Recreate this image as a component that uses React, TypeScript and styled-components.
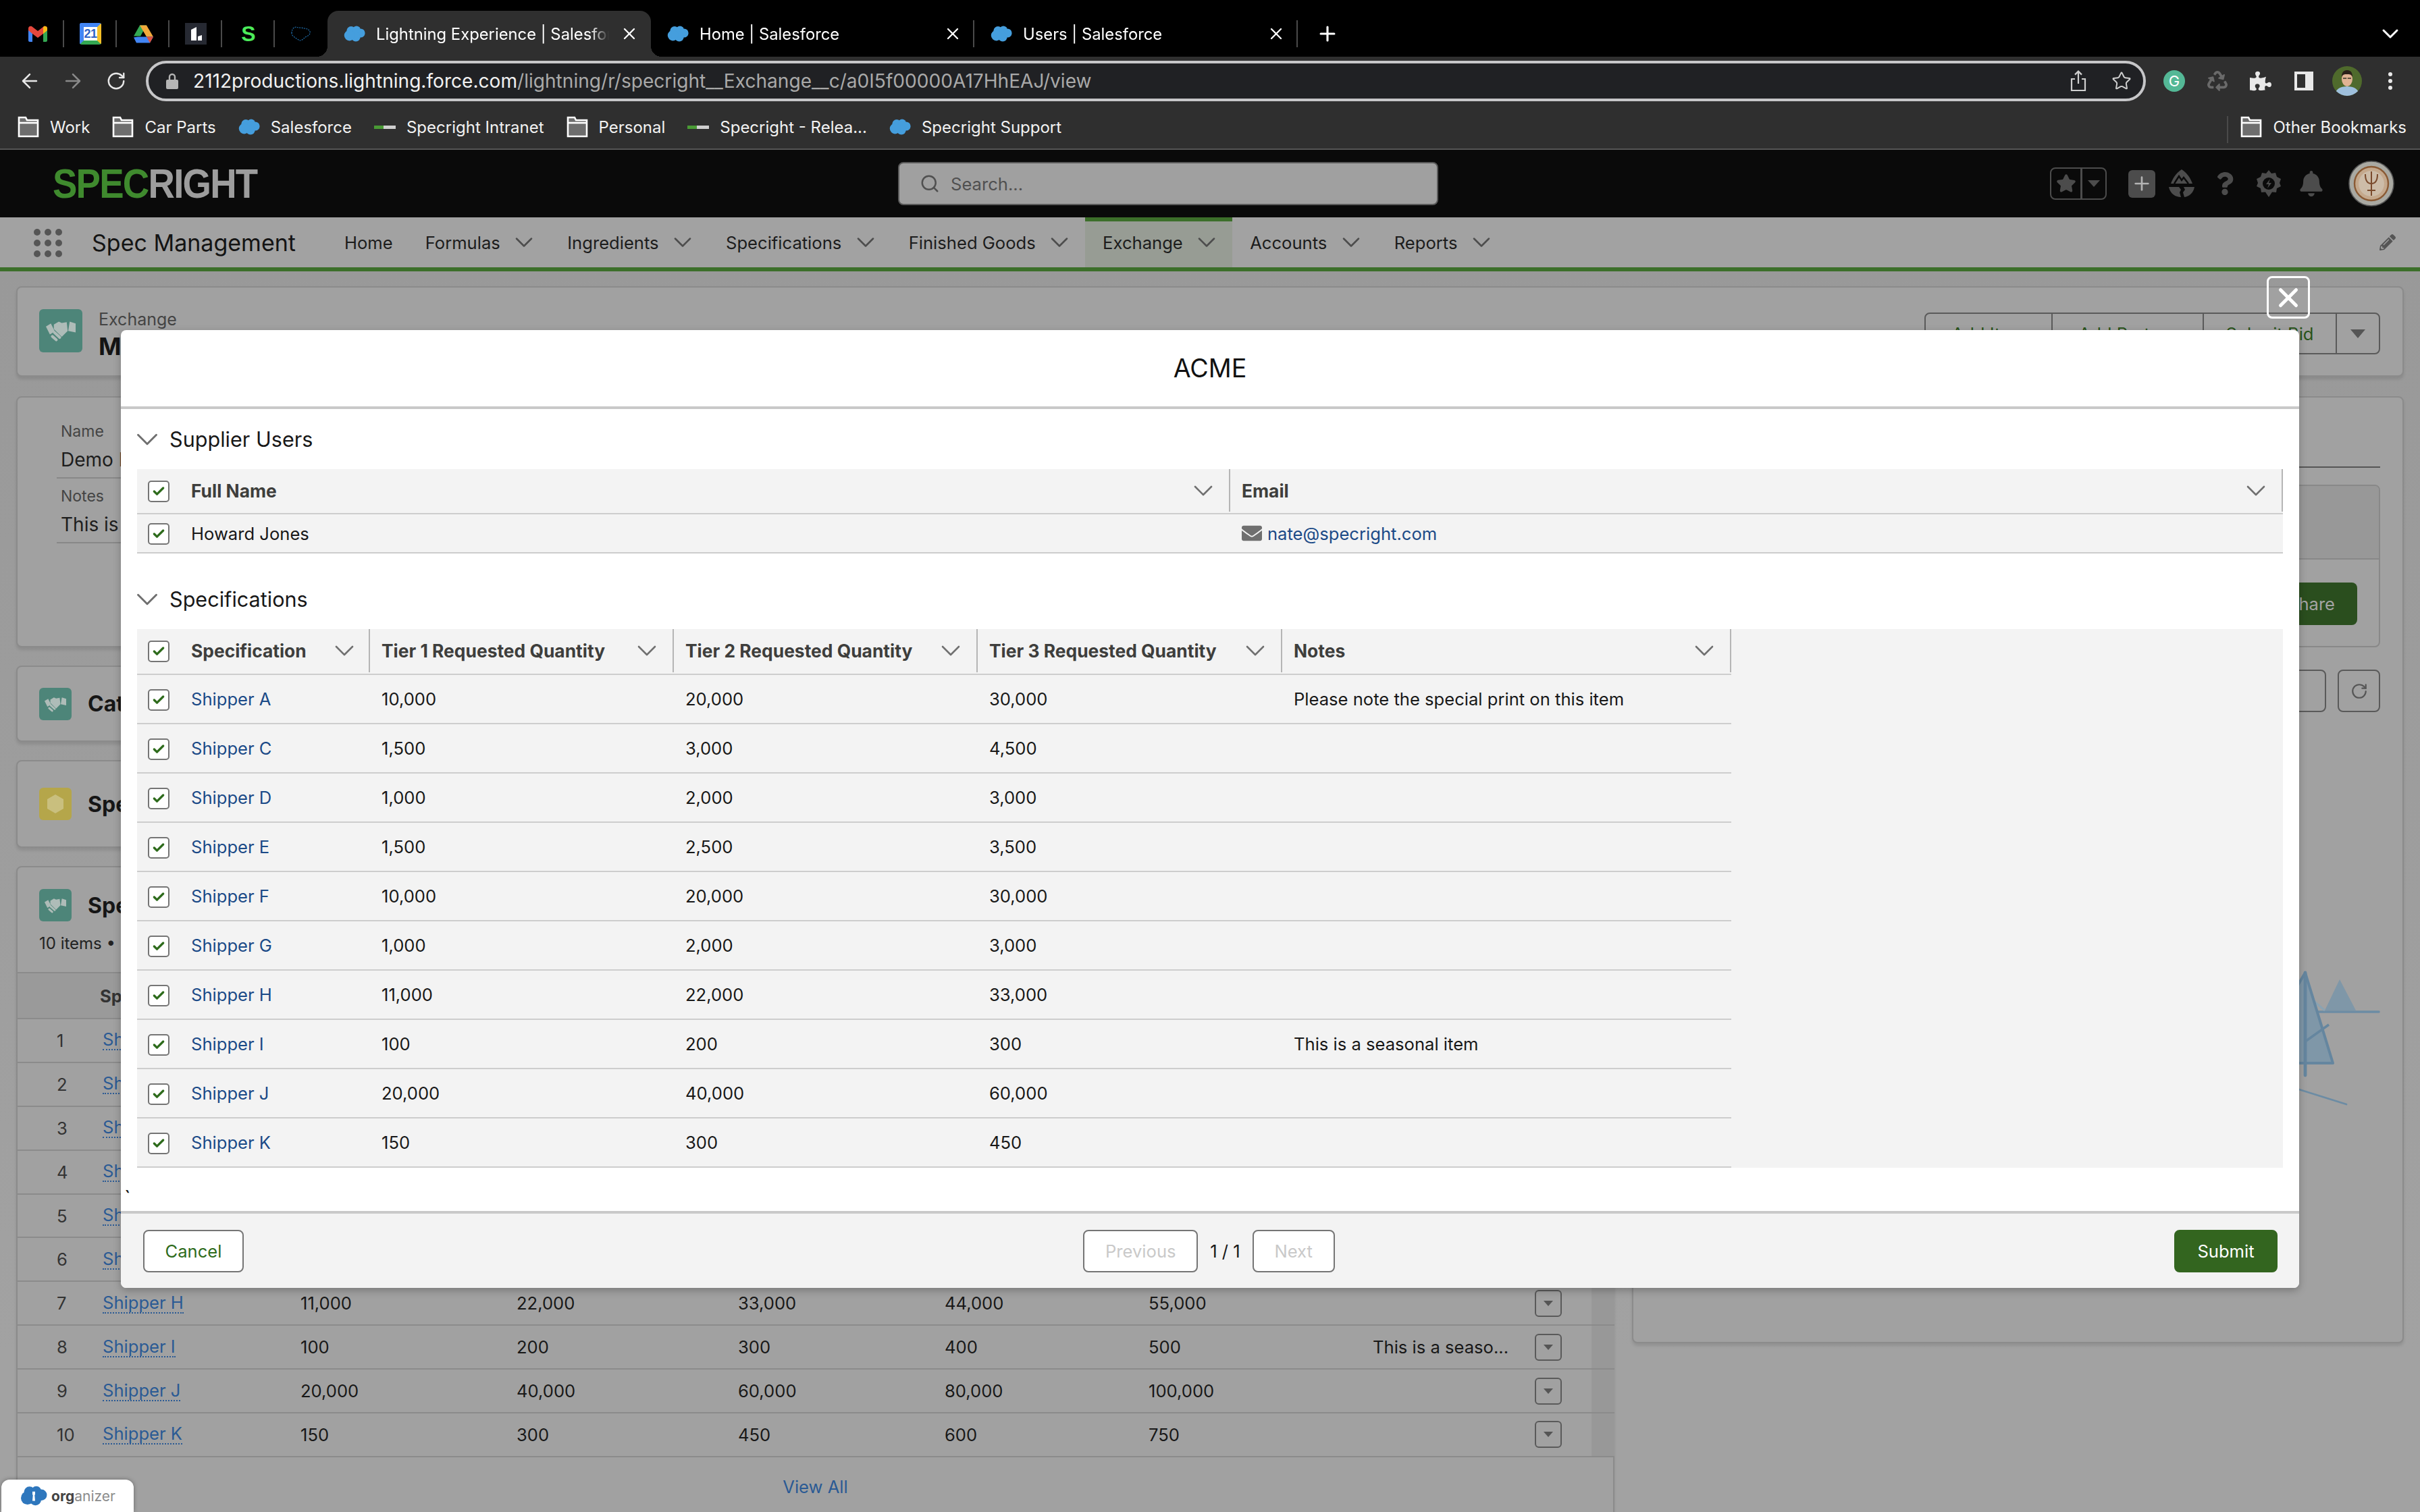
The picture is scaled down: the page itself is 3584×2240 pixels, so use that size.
import React from 'react';
import styled, { createGlobalStyle } from 'styled-components';
import {
  ArrowLeft,
  ArrowRight,
  Check,
  ChevronDown,
  Plus,
  RotateCw,
  Search,
  Star,
  X,
} from 'lucide-react';
import { FaBell, FaPuzzlePiece, FaRecycle, FaPencilAlt, FaEnvelope, FaQuestion } from 'react-icons/fa';

const GlobalStyle = createGlobalStyle`
  html, body {
    margin: 0;
    background: #000;
    overflow: hidden;
  }
  * {
    box-sizing: border-box;
  }
`;

// the shot is a 2x retina capture, everything below is in 1792x1120 units
const Stage = styled.div`
  zoom: 2;
  position: relative;
  width: 1792px;
  height: 1120px;
  overflow: hidden;
  display: flex;
  flex-direction: column;
  font-family: Inter, 'Liberation Sans', sans-serif;
  font-size: 12.8px;
  color: #181818;
`;

/* browser chrome */
const TabStrip = styled.div`
  height: 42px;
  flex: none;
  background: #000;
  display: flex;
  align-items: flex-end;
  padding-left: 8.5px;
  color: #fff;
`;

const PinnedTab = styled.div<{ $last?: boolean }>`
  width: 39px;
  height: 34px;
  display: flex;
  align-items: center;
  justify-content: center;
  position: relative;
  &::after {
    content: '';
    display: ${(p) => (p.$last ? 'none' : 'block')};
    position: absolute;
    right: 0;
    top: 7px;
    height: 20px;
    width: 1px;
    background: #4a4a4a;
  }
`;

const BrowserTab = styled.div<{ $active?: boolean; $divider?: boolean }>`
  width: 239.5px;
  height: 34px;
  padding: 0 9px 0 12px;
  display: flex;
  align-items: center;
  gap: 8px;
  border-radius: 8px 8px 0 0;
  background: ${(p) => (p.$active ? '#2f2f2f' : 'transparent')};
  position: relative;
  &::before {
    content: '';
    display: ${(p) => (p.$active ? 'block' : 'none')};
    position: absolute;
    left: -8px;
    right: -8px;
    bottom: 0;
    height: 8px;
    background:
      radial-gradient(circle at 0 0, transparent 8px, #2f2f2f 8px) left bottom / 8px 8px no-repeat,
      radial-gradient(circle at 100% 0, transparent 8px, #2f2f2f 8px) right bottom / 8px 8px no-repeat;
  }
  &::after {
    content: '';
    display: ${(p) => (p.$divider ? 'block' : 'none')};
    position: absolute;
    right: 0;
    top: 7px;
    height: 20px;
    width: 1px;
    background: #4a4a4a;
  }
`;

const TabTitle = styled.span`
  flex: 1;
  overflow: hidden;
  white-space: nowrap;
  font-size: 11.9px;
  -webkit-mask-image: linear-gradient(90deg, #000 92%, transparent 100%);
  mask-image: linear-gradient(90deg, #000 92%, transparent 100%);
`;

const NewTab = styled.div`
  width: 44px;
  height: 34px;
  display: flex;
  align-items: center;
  justify-content: center;
`;

const TabListButton = styled.div`
  margin-left: auto;
  margin-right: 12px;
  height: 34px;
  display: flex;
  align-items: center;
`;

const Toolbar = styled.div`
  height: 36px;
  flex: none;
  background: #2f2f2f;
  display: flex;
  align-items: center;
  padding-left: 13px;
  color: #e8e8e8;
`;

const ToolButton = styled.div<{ $width?: number }>`
  width: ${(p) => p.$width ?? 32}px;
  height: 30px;
  flex: none;
  display: flex;
  align-items: center;
  justify-content: center;
`;

const UrlBar = styled.div`
  width: 1481px;
  height: 30px;
  flex: none;
  margin-left: -1px;
  border: 2px solid #c6c6c8;
  border-radius: 15px;
  background: #202124;
  display: flex;
  align-items: center;
  padding: 0 0 0 13px;
  font-size: 14.05px;
  white-space: nowrap;
`;

const LockIcon = styled.svg`
  flex: none;
  margin-right: 11px;
`;

const UrlHost = styled.span`
  color: #f1f1f1;
`;

const UrlPath = styled.span`
  color: #a9a9a9;
  flex: 1;
`;

const Bookmarks = styled.div`
  height: 33px;
  flex: none;
  background: #2f2f2f;
  border-bottom: 1px solid #555;
  display: flex;
  align-items: center;
  padding-left: 13px;
  gap: 16.5px;
  color: #f2f2f2;
  font-size: 12px;
  white-space: nowrap;
`;

const Bookmark = styled.div`
  display: flex;
  align-items: center;
  gap: 8px;
`;

const OtherBookmarks = styled(Bookmark)`
  margin-left: auto;
  padding-left: 10px;
  padding-right: 10px;
  position: relative;
  &::before {
    content: '';
    position: absolute;
    left: 0;
    top: 0;
    height: 20px;
    width: 1px;
    background: #4a4a4a;
  }
`;

/* salesforce global header */
const GlobalHeader = styled.div`
  height: 50px;
  flex: none;
  background: #0a0a0a;
  display: flex;
  align-items: center;
  padding-left: 39px;
  position: relative;
`;

const Logo = styled.div`
  width: 153px;
  font-family: 'Liberation Sans', sans-serif;
  font-weight: 700;
  font-size: 30.5px;
  letter-spacing: -1px;
  white-space: nowrap;
  color: #9d9d9d;
  transform: scaleX(0.895);
  transform-origin: left center;
`;

const LogoSpec = styled.span`
  color: #3f8a2e;
`;

const SearchBox = styled.div`
  width: 400px;
  height: 32px;
  margin-left: 473px;
  background: #a0a0a0;
  border: 1px solid #5a5a5a;
  border-radius: 4px;
  display: flex;
  align-items: center;
  padding-left: 15px;
  gap: 8px;
  color: #505050;
`;

const HeaderActions = styled.div`
  margin-left: auto;
  margin-right: 19px;
  display: flex;
  align-items: center;
`;

const FavouriteGroup = styled.div`
  width: 42px;
  height: 24px;
  display: flex;
  border: 1px solid #4c4c4c;
  border-radius: 4px;
  margin-right: 16px;
`;

const FavouriteStar = styled.div`
  width: 23px;
  display: flex;
  align-items: center;
  justify-content: center;
  border-right: 1.5px solid #4c4c4c;
`;

const FavouriteCaret = styled.div`
  flex: 1;
  display: flex;
  align-items: center;
  justify-content: center;
`;

const GlobalAdd = styled.div`
  width: 20px;
  height: 20.5px;
  border-radius: 3px;
  background: #4c4c4c;
  color: #b4b4b4;
  display: flex;
  align-items: center;
  justify-content: center;
`;

const HeaderIcon = styled.div<{ $gap: number; $width: number }>`
  width: ${(p) => p.$width}px;
  margin-left: ${(p) => p.$gap}px;
  height: 22px;
  display: flex;
  align-items: center;
  justify-content: center;
  color: #4c4c4c;
`;

/* app nav */
const NavBar = styled.div`
  height: 40px;
  flex: none;
  background: #a2a2a2;
  border-bottom: 3px solid #3c6f2a;
  display: flex;
  align-items: stretch;
  padding-left: 25px;
  position: relative;
`;

const Waffle = styled.div`
  width: 21px;
  display: grid;
  grid-template-columns: repeat(3, 5px);
  grid-auto-rows: 5px;
  gap: 3px;
  align-content: center;
  margin-top: 1px;
`;

const WaffleDot = styled.span`
  border-radius: 50%;
  background: #555;
`;

const AppName = styled.div`
  width: 174px;
  margin-left: 22px;
  font-size: 17px;
  display: flex;
  align-items: center;
  color: #141414;
  white-space: nowrap;
`;

const NavItem = styled.div<{ $active?: boolean }>`
  display: flex;
  align-items: center;
  padding: 0 13px;
  gap: 9.7px;
  white-space: nowrap;
  color: #1c1c1c;
  background: ${(p) => (p.$active ? '#979c94' : 'transparent')};
  position: relative;
  &::before {
    content: '';
    display: ${(p) => (p.$active ? 'block' : 'none')};
    position: absolute;
    left: 0;
    right: 0;
    top: 0;
    height: 3px;
    background: #3c6f2a;
  }
`;

const NavHome = styled(NavItem)`
  margin-right: -2px;
`;

const NavChevron = styled(ChevronDown)`
  color: #4d4d4d;
  margin: 0 -5px 0 -3px;
`;

const NavEdit = styled.div`
  margin-left: auto;
  margin-right: 18px;
  display: flex;
  align-items: center;
  color: #555;
`;

/* record page behind the backdrop */
const Page = styled.div`
  flex: 1;
  min-height: 0;
  overflow: hidden;
  background: linear-gradient(180deg, #999 0, #9c9c9c 300px, #a2a2a2 800px);
  padding: 11px 12px 0;
`;

const Card = styled.div`
  background: #a1a1a1;
  border: 1px solid #8b8b8b;
  border-radius: 4px;
  box-shadow: 0 2px 2px rgba(0, 0, 0, 0.1);
`;

const RecordHeader = styled(Card)`
  height: 67px;
  margin-bottom: 14.5px;
  display: flex;
  align-items: flex-start;
  padding: 16px 16.5px 0 16px;
`;

const ObjectIcon = styled.div<{ $size: number; $color?: string }>`
  width: ${(p) => p.$size}px;
  height: ${(p) => p.$size}px;
  flex: none;
  border-radius: 3px;
  background: ${(p) => p.$color ?? '#4d8579'};
  color: #aebcb8;
  display: flex;
  align-items: center;
  justify-content: center;
`;

const RecordTitles = styled.div`
  margin-left: 12px;
`;

const RecordType = styled.div`
  color: #444;
  font-size: 12.5px;
  line-height: 15px;
`;

const RecordName = styled.div`
  font-size: 18px;
  line-height: 21px;
  font-weight: 700;
  color: #141414;
  margin-top: 2px;
`;

const ButtonGroup = styled.div`
  margin-left: auto;
  margin-top: 2.5px;
  height: 31px;
  display: flex;
  border: 1px solid #5a5a5a;
  border-radius: 4px;
  color: #28531a;
  white-space: nowrap;
`;

const GroupButton = styled.div<{ $width: number }>`
  width: ${(p) => p.$width}px;
  display: flex;
  align-items: center;
  justify-content: center;
  border-right: 1px solid #5a5a5a;
`;

const GroupCaret = styled.div`
  width: 31px;
  display: flex;
  align-items: center;
  justify-content: center;
`;

const Caret = styled.span<{ $size?: number; $color?: string }>`
  width: 0;
  height: 0;
  border-left: ${(p) => p.$size ?? 5}px solid transparent;
  border-right: ${(p) => p.$size ?? 5}px solid transparent;
  border-top: ${(p) => (p.$size ?? 5) * 1.2}px solid ${(p) => p.$color ?? '#555'};
`;

const Columns = styled.div`
  display: flex;
  gap: 13px;
  align-items: flex-start;
`;

const LeftColumn = styled.div`
  width: 1183.5px;
  flex: none;
  display: flex;
  flex-direction: column;
  gap: 13.5px;
`;

const DetailCard = styled(Card)`
  height: 186px;
  padding: 17px 16px 0 29px;
`;

const DetailLabel = styled.div`
  color: #444;
  font-size: 11.5px;
  line-height: 16px;
  padding-left: 3px;
`;

const DetailValue = styled.div`
  font-size: 14px;
  line-height: 20px;
  padding: 3px 0 3px 3px;
  border-bottom: 1px solid #888;
  margin-bottom: 5px;
  color: #1d1d1d;
`;

const RelatedCard = styled(Card)<{ $height: number }>`
  height: ${(p) => p.$height}px;
  display: flex;
  align-items: center;
  padding-left: 16px;
  gap: 12px;
`;

const CardTitle = styled.div`
  font-size: 16px;
  font-weight: 700;
  color: #161616;
`;

const ListCard = styled(Card)`
  height: 520px;
`;

const ListHeader = styled.div`
  height: 77.5px;
  padding: 16px 16px 0;
`;

const ListTitleRow = styled.div`
  display: flex;
  align-items: center;
  gap: 12px;
`;

const ListMeta = styled.div`
  margin-top: 9px;
  font-size: 12px;
  color: #222;
`;

const listColumns = '63px 146.5px 160px 164px 153px 151px 166px 120px 42px 17px';

const ListRow = styled.div<{ $head?: boolean }>`
  display: grid;
  grid-template-columns: ${listColumns};
  height: ${(p) => (p.$head ? 34 : 32.45)}px;
  align-items: center;
  border-top: 1px solid #8b8b8b;
  background: ${(p) => (p.$head ? '#9a9a9a' : 'transparent')};
`;

const ListIndex = styled.span`
  padding-left: 29px;
  color: #333;
`;

const ListLink = styled.span`
  justify-self: start;
  color: #2a5a94;
  border-bottom: 1px dotted #2a5a94;
  line-height: 14px;
`;

const ListHeadText = styled.span`
  font-weight: 700;
  color: #333;
  margin-left: -2px;
`;

const RowMenu = styled.div`
  width: 20px;
  height: 20px;
  border: 1px solid #5a5a5a;
  border-radius: 3px;
  display: flex;
  align-items: center;
  justify-content: center;
`;

const Gutter = styled.div<{ $column?: number }>`
  grid-column: ${(p) => p.$column ?? 'auto'};
  height: 100%;
  background: #989898;
`;

const ViewAll = styled.div`
  height: 45px;
  border-top: 1px solid #8b8b8b;
  display: flex;
  align-items: center;
  justify-content: center;
  color: #2a5a94;
`;

const RightCard = styled(Card)`
  width: 571.5px;
  height: 701.6px;
  flex: none;
  padding: 0 16.5px 0 16px;
  display: flex;
  flex-direction: column;
`;

const RightTabs = styled.div`
  height: 52px;
  flex: none;
  border-bottom: 1px solid #555;
`;

const ShareBox = styled.div`
  margin-top: 12.5px;
  height: 120.5px;
  flex: none;
  border: 1px solid #888;
  border-radius: 4px;
  overflow: hidden;
`;

const ShareBoxHead = styled.div`
  height: 54.5px;
  background: #989898;
  border-bottom: 1px solid #888;
`;

const ShareBoxBody = styled.div`
  display: flex;
  justify-content: flex-end;
  padding: 17px 16px;
`;

const ShareButton = styled.div`
  width: 68px;
  height: 31.5px;
  background: #2a4e1e;
  color: #a3a3a3;
  border-radius: 4px;
  display: flex;
  align-items: center;
  justify-content: center;
`;

const FilterRow = styled.div`
  margin-top: 16.5px;
  height: 31.5px;
  flex: none;
  display: flex;
  gap: 8.5px;
`;

const FilterInput = styled.div`
  flex: 1;
  border: 1px solid #5a5a5a;
  border-radius: 4px;
`;

const RefreshButton = styled.div`
  width: 31.5px;
  border: 1px solid #5a5a5a;
  border-radius: 4px;
  color: #555;
  display: flex;
  align-items: center;
  justify-content: center;
`;

const EmptyArt = styled.svg`
  margin-top: 189px;
  align-self: flex-end;
  flex: none;
`;

const OrganizerBadge = styled.div`
  position: absolute;
  left: 1px;
  bottom: 0;
  width: 98px;
  height: 24px;
  background: #fff;
  border-radius: 6px 6px 0 0;
  box-shadow: 0 0 3px rgba(0, 0, 0, 0.35);
  display: flex;
  align-items: center;
  padding-left: 14px;
  gap: 3px;
  font-size: 10.5px;
  color: #8c8c8c;
`;

const OrganizerBold = styled.span`
  color: #444;
  font-weight: 700;
`;

/* modal */
const CloseButton = styled.div`
  position: absolute;
  left: 1678.7px;
  top: 204.5px;
  width: 32px;
  height: 31.5px;
  border: 1.5px solid #fff;
  border-radius: 4px;
  color: #fff;
  display: flex;
  align-items: center;
  justify-content: center;
`;

const Modal = styled.div`
  position: absolute;
  left: 89.5px;
  top: 244.5px;
  width: 1613px;
  height: 709.5px;
  display: flex;
  flex-direction: column;
  background: #fff;
  border-radius: 4px;
  box-shadow: 0 2px 6px rgba(0, 0, 0, 0.25);
  overflow: hidden;
`;

const ModalHeader = styled.div`
  height: 58.5px;
  flex: none;
  border-bottom: 2px solid #c9c9c9;
  display: flex;
  align-items: center;
  justify-content: center;
  font-size: 18.8px;
  color: #111;
`;

const ModalBody = styled.div`
  flex: 1;
  padding: 0 12px;
  position: relative;
`;

const SectionTitle = styled.div<{ $spaced?: boolean }>`
  height: 44.5px;
  margin-top: ${(p) => (p.$spaced ? 11.5 : 0)}px;
  display: flex;
  align-items: center;
  gap: 3px;
  margin-left: -6px;
  font-size: 15.3px;
  color: #181818;
`;

const SectionChevron = styled(ChevronDown)`
  color: #6f6f6f;
`;

const TableArea = styled.div`
  background: #f3f3f3;
`;

const SpecTable = styled.div`
  width: 1180.5px;
`;

const TableRow = styled.div<{ $columns: string; $height: number }>`
  display: grid;
  grid-template-columns: ${(p) => p.$columns};
  height: ${(p) => p.$height}px;
  align-items: stretch;
  border-bottom: 1px solid #cdcdcd;
`;

const HeadCell = styled.div<{ $lead?: boolean }>`
  display: flex;
  align-items: center;
  gap: 16px;
  padding: 0 7px 0 ${(p) => (p.$lead ? 8 : 8.5)}px;
  border-right: 1px solid #b5b5b5;
  margin-bottom: 1px;
  font-size: 13.2px;
  font-weight: 700;
  color: #3e3e3c;
  white-space: nowrap;
`;

const HeadLabel = styled.span`
  flex: 1;
`;

const HeadChevron = styled(ChevronDown)`
  flex: none;
  color: #707070;
`;

const Cell = styled.div<{ $lead?: boolean }>`
  display: flex;
  align-items: center;
  gap: 16px;
  padding: 0 8px 0 ${(p) => (p.$lead ? 8 : 8.5)}px;
  white-space: nowrap;
`;

const SpecLink = styled.span`
  color: #1b4a87;
`;

const CheckBox = styled.span`
  width: 16px;
  height: 16px;
  flex: none;
  background: #fff;
  border: 1px solid #757575;
  border-radius: 2.5px;
  color: #2e6b1c;
  display: flex;
  align-items: center;
  justify-content: center;
  margin-top: 1px;
`;

const MailLink = styled.span`
  display: flex;
  align-items: center;
  gap: 4px;
  color: #1b4a87;
`;

const Backtick = styled.span`
  position: absolute;
  left: 2.5px;
  top: 577px;
  font-size: 15px;
  line-height: 15px;
`;

const ModalFooter = styled.div`
  height: 57px;
  flex: none;
  background: #f3f3f3;
  border-top: 2px solid #c9c9c9;
  display: grid;
  grid-template-columns: 1fr auto 1fr;
  align-items: center;
  padding: 0 16px 0 16.5px;
`;

const Button = styled.div<{ $width: number; $disabled?: boolean }>`
  width: ${(p) => p.$width}px;
  height: 31.5px;
  background: #fff;
  border: 1px solid #757575;
  border-radius: 4px;
  color: ${(p) => (p.$disabled ? '#c9c9c9' : '#2e6b1c')};
  display: flex;
  align-items: center;
  justify-content: center;
`;

const BrandButton = styled(Button)`
  justify-self: end;
  background: #33651f;
  border-color: #33651f;
  color: #fff;
`;

const Pager = styled.div`
  display: flex;
  align-items: center;
  gap: 9px;
  margin-left: -2px;
`;

const Cloud = ({ size = 16, color = '#459edd', keyhole }: { size?: number; color?: string; keyhole?: boolean }) => (
  <svg width={size} height={size * 0.75} viewBox="0 0 16 12" fill={color} style={{ flex: 'none' }}>
    <circle cx="5.500" cy="3.800" r="3.300" />
    <circle cx="9.500" cy="3.300" r="3" />
    <circle cx="12.500" cy="5.500" r="3.300" />
    <circle cx="9" cy="8.300" r="3.400" />
    <circle cx="4.300" cy="7.300" r="3.900" />
    {keyhole && <path d="M7.200 3.500h1.600v1.700l-.3.4.3 3.400H7.200l.3-3.400-.3-.4z" fill="#fff" />}
  </svg>
);

const Folder = () => (
  <svg width="16" height="16" viewBox="0 0 16 16" style={{ flex: 'none' }}>
    <path d="M1 3V1h5l1 2h8v12H1z" fill="#6e6e6e" stroke="#fff" strokeWidth="1.300" />
    <path d="M1 5h14" stroke="#fff" strokeWidth="1.300" />
  </svg>
);

const SpecrightMini = () => (
  <svg width="16" height="16" viewBox="0 0 16 16" style={{ flex: 'none' }}>
    <rect x="0" y="7" width="7" height="2.500" fill="#4a9a35" />
    <rect x="7" y="7" width="9" height="2.500" fill="#cfcfcf" />
  </svg>
);

const Gmail = () => (
  <svg width="15" height="12" viewBox="0 0 30 24">
    <path d="M1 6v16c0 1 1 2 2 2h4V10z" fill="#4285f4" />
    <path d="M29 6v16c0 1-1 2-2 2h-4V10z" fill="#34a853" />
    <path d="M1 7V4c0-3 3-4 5-3l9 7 9-7c2-1 5 0 5 3v3l-6 5-8 6-8-6z" fill="#e5483d" />
    <path d="M23 2.500 24 1c2-1 5 0 5 3v3l-6 5z" fill="#f9bc15" />
  </svg>
);

const CalendarIcon = styled.div`
  width: 16px;
  height: 16px;
  background: #fff;
  border: solid;
  border-color: #4285f4 #f6bf26 #34a853 #4285f4;
  border-width: 3px;
  border-radius: 1.5px;
  color: #2f62c6;
  font-family: 'Liberation Sans', sans-serif;
  font-size: 9px;
  font-weight: 700;
  line-height: 10px;
  text-align: center;
  letter-spacing: -0.3px;
`;

const Drive = () => (
  <svg width="15" height="14" viewBox="0 0 30 27">
    <path d="M10 1h10L11 17H1z" fill="#34a853" />
    <path d="M10 1h10l10 17H20z" fill="#f2a93b" />
    <path d="M7 18h23l-5 9H5L1 19z" fill="#4285f4" />
    <path d="M25 27l-5-9h10z" fill="#e0523f" />
  </svg>
);

const LatticeTile = () => (
  <svg width="16" height="16" viewBox="0 0 16 16">
    <rect width="16" height="16" fill="#262932" />
    <path d="M4.500 5 8.500 3v10h-4zM9.500 10l3-1v4h-3z" fill="#fff" />
  </svg>
);

const GreenS = styled.span`
  color: #4cec5a;
  font-family: 'Liberation Sans', sans-serif;
  font-weight: 700;
  font-size: 16px;
`;

const DashedCloud = () => (
  <svg width="16" height="13" viewBox="0 0 16 13">
    <path
      d="M1 6c0-2 1-4 2-4 1-1 2 0 3 0s3 0 4 .5c2 0 4 1 4.500 2.500.5 1.500-1 3-2.500 3.500-2 1-3 3-5 3-1-.5-3-1.500-4.500-3C1.500 8 1 7 1 6z"
      fill="none"
      stroke="#1f6fae"
      strokeWidth="0.6"
      strokeDasharray="1 0.7"
    />
  </svg>
);

const ShareIcon = () => (
  <svg width="12" height="16" viewBox="0 0 12 16" fill="none" stroke="#cfcfcf" strokeWidth="1.100">
    <path d="M3.500 6.500H1V15h10V6.500H8.500M6 10V1M3.500 3.300 6 .8l2.500 2.500" />
  </svg>
);

const GrammarlyBadge = styled.div`
  width: 16px;
  height: 16px;
  border-radius: 50%;
  background: #54b896;
  color: #fff;
  font-size: 11px;
  display: flex;
  align-items: center;
  justify-content: center;
`;

const SidePanel = () => (
  <svg width="14" height="14" viewBox="0 0 14 14">
    <path d="M0 0h14v14H0z" fill="#e8e8e8" />
    <path d="M2 2h6v10H2z" fill="#2f2f2f" />
  </svg>
);

const Profile = () => (
  <svg width="22" height="22" viewBox="0 0 22 22">
    <clipPath id="profile-clip">
      <circle cx="11" cy="11" r="11" />
    </clipPath>
    <g clipPath="url(#profile-clip)">
      <rect width="22" height="22" fill="#4f6a2c" />
      <path d="M2 22c0-5 4-7 9-7s9 2 9 7z" fill="#9fc0dd" />
      <ellipse cx="11" cy="9.500" rx="4" ry="5.500" fill="#e0b394" />
      <path d="M7 8c0-4 2-5 4-5s4 1 4 5c-1-2-2-2-4-2s-3 0-4 2z" fill="#2b2119" />
      <path d="M8 9h2.600M11.400 9H14" stroke="#332" strokeWidth="0.7" />
    </g>
  </svg>
);

const MenuDots = () => (
  <svg width="4" height="14" viewBox="0 0 4 14" fill="#e8e8e8">
    <circle cx="2" cy="2" r="1.500" />
    <circle cx="2" cy="7" r="1.500" />
    <circle cx="2" cy="12" r="1.500" />
  </svg>
);

const LockGlyph = () => (
  <LockIcon width="9" height="12" viewBox="0 0 9 12" fill="#b5b5b5">
    <path d="M1 5h7a1 1 0 0 1 1 1v5a1 1 0 0 1-1 1H1a1 1 0 0 1-1-1V6a1 1 0 0 1 1-1z" />
    <path d="M2.500 5V3a2 2 0 0 1 4 0v2" fill="none" stroke="#b5b5b5" strokeWidth="1.200" />
  </LockIcon>
);

const Trail = () => (
  <svg width="19" height="21" viewBox="0 0 19 21" fill="#4c4c4c">
    <path d="M9.500 0c3 2 6 5 8 10.500H1.500C3.500 5 6.500 2 9.500 0z" />
    <path d="M0 13h7.500l1.500 2-1 2 1 3.500C5 20.500 1 18 0 13zM11 13h8c-.8 4.500-4 7-7.500 7.500L10.500 17l1.500-2z" />
    <path d="M4 10.500 7.500 5l2 3 1.500-2 3.500 4.500" fill="none" stroke="#0a0a0a" strokeWidth="1.200" />
  </svg>
);

const Gear = () => (
  <svg width="18" height="20" viewBox="0 0 18 20" fill="#4c4c4c">
    <path d="M9 0l2 2.500 3-.5 1 3 3 1.500L17 9.500l1 2.500-3 1.500-.5 3-3-.3L9 20l-2.500-3.800-3 .3-.5-3L0 12l1-2.500-1-3L3 5l1-3 3 .5z" />
    <circle cx="9" cy="10" r="4.500" fill="#0a0a0a" />
    <path d="M10 6.500 7 10.500h2L8 13.500l3-4H9z" fill="#4c4c4c" />
  </svg>
);

const ClockAvatar = () => (
  <svg width="34" height="34" viewBox="0 0 34 34">
    <circle cx="17" cy="17" r="16.500" fill="#a9a9a2" stroke="#555" strokeWidth="0.8" />
    <circle cx="17" cy="17" r="12.500" fill="#c4a88c" stroke="#8a5a34" strokeWidth="1.200" />
    <circle cx="17" cy="17" r="9.500" fill="#cdbca8" />
    <path d="M17 8v18M12.500 10c0 5 2 7 4.500 7s4.500-2 4.500-7M14 22h6" fill="none" stroke="#7a4a2c" strokeWidth="1" />
  </svg>
);

// clasped hands: two cuffs, a solid clasp and finger dashes to the lower left
const Handshake = ({ size }: { size: number }) => (
  <svg width={size} height={size * 0.8} viewBox="0 0 30 24" fill="#aebcb8">
    <path d="M0 8 5 5l4 8-5 3z" />
    <path d="M30 5l-6-2-1.500 9.500L30 14z" />
    <path d="M8 6l5-3 3 1.500L21 3.500l1 9-6 6-8-8z" />
    <path d="M8.500 14 14 19" fill="none" stroke="#aebcb8" strokeWidth="2.800" strokeLinecap="round" />
    <path d="M6.500 18 10.500 21.500" fill="none" stroke="#aebcb8" strokeWidth="2.800" strokeLinecap="round" />
  </svg>
);

const SkiArt = () => (
  <EmptyArt width="163" height="105" viewBox="1600 715 163 105">
    <path d="M1733 724 1745 747h-23z" fill="#7f97a8" />
    <path d="M1690 748h72" stroke="#6c8ca4" strokeWidth="1.800" strokeLinecap="round" />
    <path d="M1708 735 1722 747" stroke="#8ba3b2" strokeWidth="1.500" />
    <path d="M1707.500 719 1728 786h-60z" fill="#7f97a8" stroke="#65869f" strokeWidth="2" strokeLinejoin="round" />
    <path d="M1707.500 719v76" stroke="#65869f" strokeWidth="2.400" strokeLinecap="round" />
    <path d="M1707.500 770 1725 757.500" stroke="#65869f" strokeWidth="1.800" />
    <path d="M1660 792 1738 816.500" stroke="#6c8ca4" strokeWidth="1.400" strokeLinecap="round" />
  </EmptyArt>
);

const navItems = ['Formulas', 'Ingredients', 'Specifications', 'Finished Goods', 'Exchange', 'Accounts', 'Reports'];

const specs = [
  ['Shipper A', '10,000', '20,000', '30,000', 'Please note the special print on this item'],
  ['Shipper C', '1,500', '3,000', '4,500', ''],
  ['Shipper D', '1,000', '2,000', '3,000', ''],
  ['Shipper E', '1,500', '2,500', '3,500', ''],
  ['Shipper F', '10,000', '20,000', '30,000', ''],
  ['Shipper G', '1,000', '2,000', '3,000', ''],
  ['Shipper H', '11,000', '22,000', '33,000', ''],
  ['Shipper I', '100', '200', '300', 'This is a seasonal item'],
  ['Shipper J', '20,000', '40,000', '60,000', ''],
  ['Shipper K', '150', '300', '450', ''],
];

const listRows = [
  ['Shipper A', '10,000', '20,000', '30,000', '40,000', '50,000', ''],
  ['Shipper C', '1,500', '3,000', '4,500', '6,000', '7,500', ''],
  ['Shipper D', '1,000', '2,000', '3,000', '4,000', '5,000', ''],
  ['Shipper E', '1,500', '2,500', '3,500', '4,500', '5,500', ''],
  ['Shipper F', '10,000', '20,000', '30,000', '40,000', '50,000', ''],
  ['Shipper G', '1,000', '2,000', '3,000', '4,000', '5,000', ''],
  ['Shipper H', '11,000', '22,000', '33,000', '44,000', '55,000', ''],
  ['Shipper I', '100', '200', '300', '400', '500', 'This is a seaso...'],
  ['Shipper J', '20,000', '40,000', '60,000', '80,000', '100,000', ''],
  ['Shipper K', '150', '300', '450', '600', '750', ''],
];

const specHeads = ['Specification', 'Tier 1 Requested Quantity', 'Tier 2 Requested Quantity', 'Tier 3 Requested Quantity', 'Notes'];
const specColumns = '172.5px 225px 225px 225.5px 332.5px';
const userColumns = '809.5px 1fr';

const Tick = () => (
  <CheckBox>
    <Check size={10} strokeWidth={4} />
  </CheckBox>
);

const App: React.FC = () => (
  <Stage>
    <GlobalStyle />
    <TabStrip>
      <PinnedTab><Gmail /></PinnedTab>
      <PinnedTab><CalendarIcon>21</CalendarIcon></PinnedTab>
      <PinnedTab><Drive /></PinnedTab>
      <PinnedTab><LatticeTile /></PinnedTab>
      <PinnedTab><GreenS>S</GreenS></PinnedTab>
      <PinnedTab $last><DashedCloud /></PinnedTab>
      <BrowserTab $active>
        <Cloud />
        <TabTitle>Lightning Experience | Salesforce</TabTitle>
        <X size={14} strokeWidth={2} />
      </BrowserTab>
      <BrowserTab $divider>
        <Cloud />
        <TabTitle>Home | Salesforce</TabTitle>
        <X size={14} strokeWidth={2} />
      </BrowserTab>
      <BrowserTab $divider>
        <Cloud />
        <TabTitle>Users | Salesforce</TabTitle>
        <X size={14} strokeWidth={2} />
      </BrowserTab>
      <NewTab><Plus size={17} strokeWidth={2.2} /></NewTab>
      <TabListButton><ChevronDown size={20} strokeWidth={1.8} /></TabListButton>
    </TabStrip>

    <Toolbar>
      <ToolButton $width={18}><ArrowLeft size={17} strokeWidth={1.8} /></ToolButton>
      <ToolButton $width={46}><ArrowRight size={17} strokeWidth={1.8} color="#8a8a8a" /></ToolButton>
      <ToolButton $width={18}><RotateCw size={15} strokeWidth={1.9} /></ToolButton>
      <ToolButton $width={14} />
      <UrlBar>
        <LockGlyph />
        <UrlHost>2112productions.lightning.force.com</UrlHost>
        <UrlPath>/lightning/r/specright__Exchange__c/a0I5f00000A17HhEAJ/view</UrlPath>
        <ToolButton $width={32}><ShareIcon /></ToolButton>
        <ToolButton $width={32}><Star size={15} strokeWidth={1.6} color="#cfcfcf" /></ToolButton>
      </UrlBar>
      <ToolButton $width={5} />
      <ToolButton><GrammarlyBadge>G</GrammarlyBadge></ToolButton>
      <ToolButton><FaRecycle size={15} color="#6a6a6a" /></ToolButton>
      <ToolButton><FaPuzzlePiece size={16} color="#e8e8e8" /></ToolButton>
      <ToolButton><SidePanel /></ToolButton>
      <ToolButton><Profile /></ToolButton>
      <ToolButton><MenuDots /></ToolButton>
    </Toolbar>

    <Bookmarks>
      <Bookmark><Folder />Work</Bookmark>
      <Bookmark><Folder />Car Parts</Bookmark>
      <Bookmark><Cloud />Salesforce</Bookmark>
      <Bookmark><SpecrightMini />Specright Intranet</Bookmark>
      <Bookmark><Folder />Personal</Bookmark>
      <Bookmark><SpecrightMini />Specright - Relea...</Bookmark>
      <Bookmark><Cloud />Specright Support</Bookmark>
      <OtherBookmarks><Folder />Other Bookmarks</OtherBookmarks>
    </Bookmarks>

    <GlobalHeader>
      <Logo><LogoSpec>SPEC</LogoSpec>RIGHT</Logo>
      <SearchBox>
        <Search size={15} strokeWidth={2} />
        Search...
      </SearchBox>
      <HeaderActions>
        <FavouriteGroup>
          <FavouriteStar><Star size={15} fill="#4c4c4c" color="#4c4c4c" /></FavouriteStar>
          <FavouriteCaret><Caret $size={4.500} $color="#4c4c4c" /></FavouriteCaret>
        </FavouriteGroup>
        <GlobalAdd><Plus size={16} strokeWidth={2} /></GlobalAdd>
        <HeaderIcon $gap={10} $width={19}><Trail /></HeaderIcon>
        <HeaderIcon $gap={16} $width={13}><FaQuestion size={17} /></HeaderIcon>
        <HeaderIcon $gap={17} $width={18}><Gear /></HeaderIcon>
        <HeaderIcon $gap={13} $width={19}><FaBell size={19} /></HeaderIcon>
        <HeaderIcon $gap={18} $width={34}><ClockAvatar /></HeaderIcon>
      </HeaderActions>
    </GlobalHeader>

    <NavBar>
      <Waffle>
        {Array.from({ length: 9 }, (_, i) => <WaffleDot key={i} />)}
      </Waffle>
      <AppName>Spec Management</AppName>
      <NavHome>Home</NavHome>
      {navItems.map((item) => (
        <NavItem key={item} $active={item === 'Exchange'}>
          {item}
          <NavChevron size={22} strokeWidth={1.4} />
        </NavItem>
      ))}
      <NavEdit><FaPencilAlt size={12} /></NavEdit>
    </NavBar>

    <Page>
      <RecordHeader>
        <ObjectIcon $size={32}><Handshake size={22} /></ObjectIcon>
        <RecordTitles>
          <RecordType>Exchange</RecordType>
          <RecordName>Mock Exchange</RecordName>
        </RecordTitles>
        <ButtonGroup>
          <GroupButton $width={94}>Add Item</GroupButton>
          <GroupButton $width={112}>Add Partner</GroupButton>
          <GroupButton $width={98.500}>Submit Bid</GroupButton>
          <GroupCaret><Caret $size={5.500} /></GroupCaret>
        </ButtonGroup>
      </RecordHeader>

      <Columns>
        <LeftColumn>
          <DetailCard>
            <DetailLabel>Name</DetailLabel>
            <DetailValue>Demo Exchange</DetailValue>
            <DetailLabel>Notes</DetailLabel>
            <DetailValue>This is a demo</DetailValue>
          </DetailCard>
          <RelatedCard $height={56.5}>
            <ObjectIcon $size={24}><Handshake size={16} /></ObjectIcon>
            <CardTitle>Categories</CardTitle>
          </RelatedCard>
          <RelatedCard $height={65}>
            <ObjectIcon $size={24} $color="#b5a64a">
              <svg width="14" height="14" viewBox="0 0 14 14" fill="#c9bf7e">
                <path d="M7 0l6 3.500v7L7 14l-6-3.500v-7z" />
              </svg>
            </ObjectIcon>
            <CardTitle>Specifications</CardTitle>
          </RelatedCard>
          <ListCard>
            <ListHeader>
              <ListTitleRow>
                <ObjectIcon $size={24}><Handshake size={16} /></ObjectIcon>
                <CardTitle>Specifications (10)</CardTitle>
              </ListTitleRow>
              <ListMeta>10 items • Updated a few seconds ago</ListMeta>
            </ListHeader>
            <ListRow $head>
              <span />
              <ListHeadText>Specification</ListHeadText>
              <Gutter $column={10} />
            </ListRow>
            {listRows.map((row, i) => (
              <ListRow key={row[0]}>
                <ListIndex>{i + 1}</ListIndex>
                <ListLink>{row[0]}</ListLink>
                <span>{row[1]}</span>
                <span>{row[2]}</span>
                <span>{row[3]}</span>
                <span>{row[4]}</span>
                <span>{row[5]}</span>
                <span>{row[6]}</span>
                <RowMenu><Caret $size={3.500} /></RowMenu>
                <Gutter />
              </ListRow>
            ))}
            <ViewAll>View All</ViewAll>
          </ListCard>
        </LeftColumn>

        <RightCard>
          <RightTabs />
          <ShareBox>
            <ShareBoxHead />
            <ShareBoxBody><ShareButton>Share</ShareButton></ShareBoxBody>
          </ShareBox>
          <FilterRow>
            <FilterInput />
            <RefreshButton><RotateCw size={13} strokeWidth={2} /></RefreshButton>
          </FilterRow>
          <SkiArt />
        </RightCard>
      </Columns>
    </Page>

    <OrganizerBadge>
      <Cloud size={20} color="#2e77bd" keyhole />
      <span><OrganizerBold>org</OrganizerBold>anizer</span>
    </OrganizerBadge>

    <CloseButton><X size={23} strokeWidth={2.6} /></CloseButton>

    <Modal>
      <ModalHeader>ACME</ModalHeader>
      <ModalBody>
        <SectionTitle>
          <SectionChevron size={27} strokeWidth={1.3} />
          Supplier Users
        </SectionTitle>
        <TableArea>
          <TableRow $columns={userColumns} $height={33.500}>
            <HeadCell $lead>
              <Tick />
              <HeadLabel>Full Name</HeadLabel>
              <HeadChevron size={24} strokeWidth={1.3} />
            </HeadCell>
            <HeadCell>
              <HeadLabel>Email</HeadLabel>
              <HeadChevron size={24} strokeWidth={1.3} />
            </HeadCell>
          </TableRow>
          <TableRow $columns={userColumns} $height={29}>
            <Cell $lead><Tick />Howard Jones</Cell>
            <Cell>
              <MailLink><FaEnvelope size={15} color="#6f6f6f" />nate@specright.com</MailLink>
            </Cell>
          </TableRow>
        </TableArea>

        <SectionTitle $spaced>
          <SectionChevron size={27} strokeWidth={1.3} />
          Specifications
        </SectionTitle>
        <TableArea>
          <SpecTable>
            <TableRow $columns={specColumns} $height={34}>
              {specHeads.map((head, i) => (
                <HeadCell key={head} $lead={i === 0}>
                  {i === 0 && <Tick />}
                  <HeadLabel>{head}</HeadLabel>
                  <HeadChevron size={24} strokeWidth={1.3} />
                </HeadCell>
              ))}
            </TableRow>
            {specs.map((row) => (
              <TableRow key={row[0]} $columns={specColumns} $height={36.5}>
                <Cell $lead><Tick /><SpecLink>{row[0]}</SpecLink></Cell>
                <Cell>{row[1]}</Cell>
                <Cell>{row[2]}</Cell>
                <Cell>{row[3]}</Cell>
                <Cell>{row[4]}</Cell>
              </TableRow>
            ))}
          </SpecTable>
        </TableArea>
        <Backtick>`</Backtick>
      </ModalBody>
      <ModalFooter>
        <Button $width={74.500}>Cancel</Button>
        <Pager>
          <Button $width={85} $disabled>Previous</Button>
          1 / 1
          <Button $width={61} $disabled>Next</Button>
        </Pager>
        <BrandButton $width={76.500}>Submit</BrandButton>
      </ModalFooter>
    </Modal>
  </Stage>
);

export default App;
